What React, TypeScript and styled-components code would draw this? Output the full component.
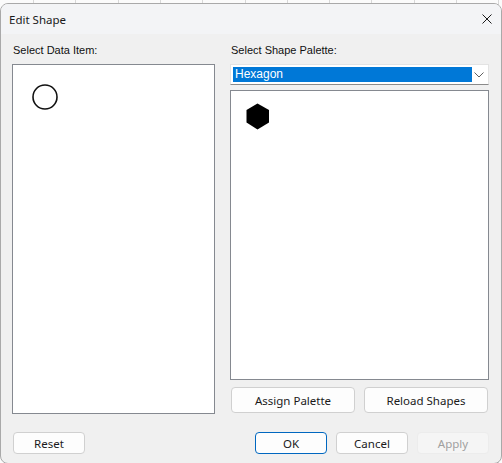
import React from "react";
import styled, { createGlobalStyle } from "styled-components";

const Global = createGlobalStyle`
  html, body { margin: 0; padding: 0; }
  body {
    width: 502px;
    height: 463px;
    overflow: hidden;
    background-color: #fbfbfb;
    background-image: repeating-linear-gradient(
      to right,
      transparent 0px,
      transparent 33px,
      #d8d8d8 33px,
      #d8d8d8 34px,
      transparent 34px,
      transparent 42.3px
    );
    font-family: "Noto Sans", "Liberation Sans", sans-serif;
  }
`;

const Dialog = styled.div`
  margin-top: 3px;
  width: 500px;
  height: 459px;
  border: 1px solid #a9a9a9;
  border-radius: 8px;
  background: #f0f0f0;
  overflow: hidden;
  display: flex;
  flex-direction: column;
  box-sizing: content-box;
`;

const TitleBar = styled.div`
  height: 30px;
  flex: none;
  display: flex;
  align-items: center;
  justify-content: space-between;
  padding: 0 9px 0 8px;
  background: #f3f4f6;
`;

const Title = styled.span`
  font-family: "Noto Sans", "Liberation Sans", sans-serif;
  font-size: 11.5px;
  color: #1a1a1a;
  margin-top: 1px;
`;

const CloseBtn = styled.div`
  width: 10px;
  height: 10px;
  display: flex;
  margin-right: 0px;
  margin-top: 0px;
`;

const Body = styled.div`
  flex: 1;
  display: flex;
  flex-direction: column;
  padding: 9px 12px 0 11px;
`;

const Columns = styled.div`
  display: grid;
  grid-template-columns: 203px 259px;
  column-gap: 15px;
`;

const Column = styled.div`
  display: flex;
  flex-direction: column;
`;

const Label = styled.div`
  font-family: "Liberation Sans", Arial, sans-serif;
  font-size: 11px;
  line-height: 14px;
  height: 14px;
  color: #111;
  margin-bottom: 7px;
  padding-left: 1px;
`;

const ListBox = styled.div<{ $h: number }>`
  height: ${(p) => p.$h}px;
  background: #fff;
  border: 1px solid #858990;
  box-sizing: border-box;
  display: flex;
  align-items: flex-start;
`;

const Combo = styled.div`
  height: 21px;
  box-sizing: border-box;
  background: #fff;
  border: 1px solid #e3e3e3;
  border-bottom: 1px solid #8a8a8a;
  display: flex;
  align-items: center;
  padding: 0 2px;
  margin-bottom: 5px;
`;

const Selected = styled.div`
  width: 239px;
  height: 15px;
  background: #0078d7;
  color: #fff;
  font-family: "Liberation Sans", Arial, sans-serif;
  font-size: 12px;
  line-height: 15px;
  padding-left: 2px;
  box-sizing: border-box;
`;

const Chevron = styled.div`
  flex: 1;
  display: flex;
  justify-content: center;
  align-items: center;
`;

const ButtonRow = styled.div<{ $gap: number }>`
  display: flex;
  gap: ${(p) => p.$gap}px;
`;

const Button = styled.button<{ $w: number; $h: number; $primary?: boolean }>`
  width: ${(p) => p.$w}px;
  height: ${(p) => p.$h}px;
  box-sizing: border-box;
  border-radius: 4px;
  border: 1px solid ${(p) => (p.$primary ? "#0067c0" : "#d0d0d0")};
  background: #fdfdfd;
  font-family: "Noto Sans", "Liberation Sans", sans-serif;
  font-size: 11.5px;
  color: #1a1a1a;
  padding: 0;
  display: flex;
  align-items: center;
  justify-content: center;
  &:disabled {
    background: #f5f5f5;
    border-color: #ececec;
    color: #a0a0a0;
  }
`;

const Footer = styled.div`
  margin-top: 18px;
  display: flex;
  justify-content: space-between;
  padding-left: 1px;
`;

export default function App() {
  return (
    <>
      <Global />
      <Dialog>
        <TitleBar>
          <Title>Edit Shape</Title>
          <CloseBtn>
            <svg width="10" height="10" viewBox="0 0 10 10">
              <path d="M0.5 0.5 L9.5 9.5 M9.5 0.5 L0.5 9.5" stroke="#1a1a1a" strokeWidth="1" />
            </svg>
          </CloseBtn>
        </TitleBar>
        <Body>
          <Columns>
            <Column>
              <Label>Select Data Item:</Label>
              <ListBox $h={350}>
                <svg width="28" height="28" viewBox="0 0 28 28" style={{ marginLeft: 18, marginTop: 18 }}>
                  <circle cx="14" cy="14" r="12" fill="none" stroke="#111" strokeWidth="1.6" />
                </svg>
              </ListBox>
            </Column>
            <Column>
              <Label>Select Shape Palette:</Label>
              <Combo>
                <Selected>Hexagon</Selected>
                <Chevron>
                  <svg width="10" height="6" viewBox="0 0 10 6">
                    <path d="M0.5 0.5 L5 5 L9.5 0.5" fill="none" stroke="#606060" strokeWidth="1" />
                  </svg>
                </Chevron>
              </Combo>
              <ListBox $h={290}>
                <svg width="24" height="27" viewBox="0 0 24 27" style={{ marginLeft: 15, marginTop: 12 }}>
                  <polygon points="11.5,0.5 23,7 23,19.5 11.5,26.5 0.5,19.5 0.5,7" fill="#000" />
                </svg>
              </ListBox>
              <ButtonRow $gap={9} style={{ marginTop: 7, paddingLeft: 1 }}>
                <Button $w={124} $h={26}>Assign Palette</Button>
                <Button $w={124} $h={26}>Reload Shapes</Button>
              </ButtonRow>
            </Column>
          </Columns>
          <Footer>
            <Button $w={72} $h={22}>Reset</Button>
            <ButtonRow $gap={9}>
              <Button $w={72} $h={22} $primary>OK</Button>
              <Button $w={72} $h={22}>Cancel</Button>
              <Button $w={72} $h={22} disabled>Apply</Button>
            </ButtonRow>
          </Footer>
        </Body>
      </Dialog>
    </>
  );
}
